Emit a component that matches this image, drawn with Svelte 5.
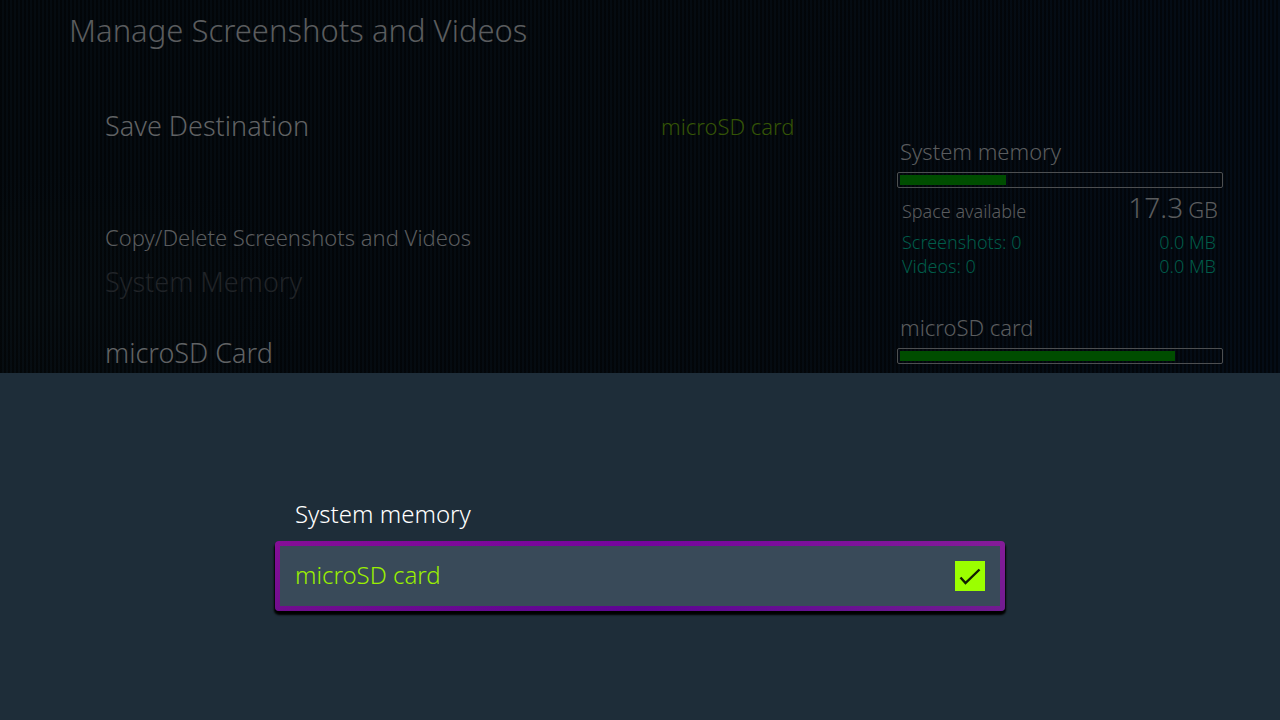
<script>
  const title = 'Manage Screenshots and Videos';
  const options = ['System memory', 'microSD card'];
  let destination = $state('microSD card');

  const storage = [
    {
      name: 'System memory',
      filled: 33,
      available: { amount: '17.3', unit: 'GB' },
      counts: [
        { label: 'Screenshots: 0', size: '0.0 MB' },
        { label: 'Videos: 0', size: '0.0 MB' }
      ]
    },
    { name: 'microSD card', filled: 86, counts: [] }
  ];
</script>

<div class="screen">
  <main class="settings">
    <h1>{title}</h1>
    <div class="columns">
      <section class="menu">
        <button class="item save">
          <span>Save Destination</span>
          <span class="value">{destination}</span>
        </button>
        <h2>Copy/Delete Screenshots and Videos</h2>
        <button class="item" disabled>System Memory</button>
        <button class="item last">microSD Card</button>
      </section>

      <aside class="storage">
        {#each storage as disk}
          <section class="disk">
            <h3>{disk.name}</h3>
            <div class="meter" role="meter" aria-label={disk.name} aria-valuemin="0" aria-valuemax="100" aria-valuenow={disk.filled}>
              <div class="fill" style="width: {disk.filled}%"></div>
            </div>
            {#if disk.available}
              <div class="line available">
                <span>Space available</span>
                <span class="amount"><b>{disk.available.amount}</b><span class="unit">{disk.available.unit}</span></span>
              </div>
            {/if}
            {#each disk.counts as count}
              <div class="line count">
                <span>{count.label}</span>
                <span>{count.size}</span>
              </div>
            {/each}
          </section>
        {/each}
      </aside>
    </div>
  </main>

  <div class="sheet" role="dialog" aria-label="Save Destination">
    <div class="options">
      {#each options as option}
        <label class="option" class:selected={destination === option}>
          <span class="name">{option}</span>
          <span class="tick">
            <input type="radio" name="destination" value={option} bind:group={destination} />
            {#if destination === option}
              <svg viewBox="0 0 30 30" aria-hidden="true">
                <path d="M5.5 16.5 L10.5 22 L24.5 8.5" />
              </svg>
            {/if}
          </span>
        </label>
      {/each}
    </div>
  </div>
</div>

<style>
  :global(body) {
    margin: 0;
    background: #1e2d39;
  }

  .screen {
    display: flex;
    flex-direction: column;
    min-height: 100vh;
    font-family: 'Noto Sans', 'Open Sans', sans-serif;
    font-weight: 300;
  }

  .settings {
    padding: 9px 57px 0 69px;
    color: #5a5c5e;
    background:
      repeating-linear-gradient(90deg, rgba(0, 0, 0, 0.5) 0 2px, transparent 2px 4px),
      radial-gradient(ellipse 260px 130px at 60px 300px, rgba(14, 22, 24, 0.3), transparent),
      linear-gradient(90deg, #050b10, #050b11 60%, #040c16);
  }

  h1,
  h2,
  h3 {
    margin: 0;
    font-weight: inherit;
  }

  h1 {
    font-size: 31px;
    line-height: 42px;
  }

  .columns {
    display: grid;
    grid-template-columns: minmax(0, 1fr) 326px;
    column-gap: 40px;
    padding-top: 55px;
  }

  .menu {
    display: flex;
    flex-direction: column;
    padding-left: 36px;
  }

  .item {
    padding: 0;
    border: 0;
    background: none;
    font: inherit;
    font-size: 27px;
    line-height: 40px;
    color: #606264;
    text-align: left;
  }

  .item:disabled {
    color: #202327;
  }

  .save {
    display: grid;
    grid-template-columns: minmax(0, 556fr) minmax(0, 196fr);
    align-items: center;
  }

  .value {
    font-size: 22px;
    color: #345406;
  }

  h2 {
    padding: 77px 0 11px;
    font-size: 22px;
    line-height: 28px;
  }

  .last {
    margin-top: 31px;
  }

  .storage {
    display: flex;
    flex-direction: column;
    gap: 35px;
    padding-top: 31px;
  }

  h3 {
    padding: 0 3px;
    font-size: 22px;
    line-height: 28px;
  }

  .meter {
    height: 10px;
    margin-top: 7px;
    padding: 2px;
    border: 1px solid #4d4f51;
    border-radius: 2px;
  }

  .fill {
    height: 100%;
    background: #004d00;
  }

  .line {
    display: flex;
    justify-content: space-between;
    align-items: baseline;
    padding: 0 7px 0 5px;
    font-size: 18px;
    line-height: 24px;
  }

  .available {
    padding-right: 5px;
    line-height: 38px;
  }

  .amount {
    display: flex;
    align-items: baseline;
    gap: 5px;
  }

  b {
    font-size: 28px;
    font-weight: inherit;
  }

  .unit {
    font-size: 22px;
  }

  .count {
    color: #005c49;
  }

  .sheet {
    display: flex;
    flex: 1;
    align-items: center;
    justify-content: center;
    padding: 40px 20px 42px;
    background: #1e2d39;
  }

  .options {
    display: flex;
    flex-direction: column;
    gap: 1px;
    width: 100%;
    max-width: 720px;
  }

  .option {
    display: flex;
    align-items: center;
    justify-content: space-between;
    height: 60px;
    padding: 0 15px;
    font-size: 24px;
    line-height: 30px;
    color: #fff;
    cursor: pointer;
  }

  .name {
    padding-bottom: 2px;
  }

  .selected {
    margin: -5px;
    border: 5px solid transparent;
    border-radius: 4px;
    color: #9bf000;
    background:
      linear-gradient(#394a59, #394a59) padding-box,
      linear-gradient(90deg, rgba(128, 16, 140, 0.6), rgba(96, 0, 150, 0.5) 50%, rgba(128, 40, 144, 0.6)) border-box,
      linear-gradient(#8c0aa6, #5a0a90) border-box;
    box-shadow: 0 3px 2px 1px #000;
  }

  .tick {
    display: grid;
    width: 30px;
    height: 30px;
  }

  input,
  svg {
    grid-area: 1 / 1;
    width: 30px;
    height: 30px;
    margin: 0;
  }

  input {
    appearance: none;
  }

  input:checked {
    background: #9bff00;
  }

  svg {
    pointer-events: none;
  }

  path {
    fill: none;
    stroke: #111f00;
    stroke-width: 2.4;
  }
</style>
